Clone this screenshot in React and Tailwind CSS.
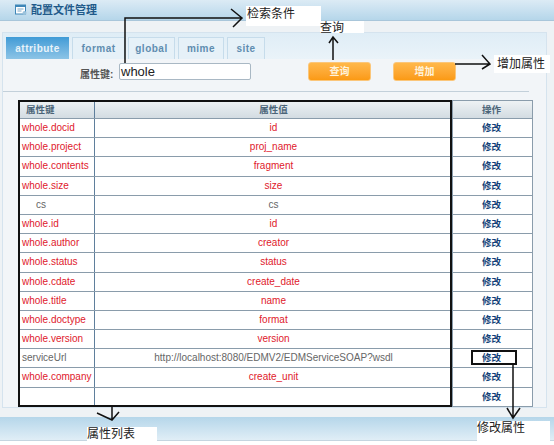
const rows = [
  ["whole.docid", "id"],
  ["whole.project", "proj_name"],
  ["whole.contents", "fragment"],
  ["whole.size", "size"],
  ["cs", "cs", "gray", true],
  ["whole.id", "id"],
  ["whole.author", "creator"],
  ["whole.status", "status"],
  ["whole.cdate", "create_date"],
  ["whole.title", "name"],
  ["whole.doctype", "format"],
  ["whole.version", "version"],
  ["serviceUrl", "http://localhost:8080/EDMV2/EDMServiceSOAP?wsdl", "gray"],
  ["whole.company", "create_unit"],
  ["", ""],
];

const tabs = [
  { name: "attribute", w: "w-[63px]" },
  { name: "format", w: "w-[53px]" },
  { name: "global", w: "w-[47px]" },
  { name: "mime", w: "w-[46px]" },
  { name: "site", w: "w-[38px]" },
];

function Note({ className, children }) {
  return (
    <div className={`absolute bg-white text-[12px] leading-[14px] text-[#222] ${className}`}>
      {children}
    </div>
  );
}

export default function App() {
  return (
    <div className="relative w-[554px] h-[445px] overflow-hidden bg-white font-['Liberation_Sans','Noto_Sans_CJK_SC',sans-serif]">
      {/* title bar */}
      <div className="h-[21px] flex items-center pl-[15px] gap-[4px] bg-gradient-to-b from-[#dcebf5] to-[#b5d6ea] border-b border-[#a9c6da]">
        <svg width="12" height="12" viewBox="0 0 12 12">
          <rect x="0.5" y="1" width="10" height="9" fill="#fff" stroke="#3f87b8" />
          <rect x="0.5" y="1" width="10" height="2" fill="#3f87b8" />
          <path d="M2.5 5h6M2.5 7h4" stroke="#7fa9c6" />
          <circle cx="9.5" cy="9" r="2" fill="#9cc3dc" />
        </svg>
        <span className="text-[11px] font-bold text-[#1f5a8a]">配置文件管理</span>
      </div>

      {/* body */}
      <div className="h-[396px] bg-[#eef2f5] pt-[11px] pl-[2px] pr-[7px]">
        <div className="h-[376px] border border-[#d5e3ee] bg-[#f2f5f8]">
          {/* tabs */}
          <div className="flex h-[26px] items-end gap-[3px] pl-[3px] bg-gradient-to-b from-[#dfedf6] to-[#eaf3f9]">
            {tabs.map((t, i) => (
              <div
                key={t.name}
                className={
                  i === 0
                    ? `${t.w} h-[22px] flex items-center justify-center text-[10px] font-bold tracking-[0.5px] text-[#e8f3fa] bg-gradient-to-b from-[#3f9bd6] to-[#8cc4e6]`
                    : `${t.w} h-[22px] flex items-center justify-center text-[10px] font-bold tracking-[0.5px] text-[#5f8db0] border border-b-0 border-[#c6dceb] bg-[#e6f1f8]`
                }
              >
                {t.name}
              </div>
            ))}
          </div>

          {/* search row */}
          <div className="flex h-[33px] w-[526px] items-start pt-[4px] border-b border-[#c3d0da]">
            <span className="ml-[77px] mt-[4px] w-[39px] text-[10px] font-bold text-[#555]">属性键:</span>
            <div className="w-[132px] h-[17px] bg-white border border-[#a9b8c4] rounded-[2px] pl-[1px] text-[13px] leading-[15px] text-[#222]">
              whole
            </div>
            <button className="ml-[57px] -mt-[1px] w-[63px] h-[19px] rounded-[3px] bg-gradient-to-b from-[#ffb84a] to-[#fb9a12] border border-[#fbc67a] text-[10px] font-bold text-[#fff3dc]">查询</button>
            <button className="ml-[22px] -mt-[1px] w-[63px] h-[19px] rounded-[3px] bg-gradient-to-b from-[#ffb84a] to-[#fb9a12] border border-[#fbc67a] text-[10px] font-bold text-[#fff3dc]">增加</button>
          </div>

          {/* table */}
          <div className="ml-[15px] mt-[8px] w-[515px] bg-white border-t border-x border-[#8a9cab]">
            <div className="grid grid-cols-[76px_358px_1fr] h-[18px] text-[9.5px] font-bold leading-[17px] text-[#4b6478] bg-gradient-to-b from-[#eef2f4] to-[#d3dce2] border-b border-[#8a9cab]">
              <div className="pl-[7px] border-r border-[#5f7f9c]">属性键</div>
              <div className="text-center border-r border-[#8a9cab]">属性值</div>
              <div className="text-center pr-[2px]">操作</div>
            </div>
            {rows.map((r, i) => (
              <div
                key={i}
                className="grid grid-cols-[76px_358px_1fr] h-[19.2px] text-[10px] leading-[18px] border-b border-[#8a9cab]"
              >
                <div
                  className={`border-r border-[#5f7f9c] ${r[3] ? "pl-[17px]" : "pl-[3px]"} ${r[2] ? "text-[#666]" : "text-[#e0202c]"}`}
                >
                  {r[0]}
                </div>
                <div className={`text-center border-r border-[#8a9cab] ${r[2] ? "text-[#666]" : "text-[#e0202c]"}`}>
                  {r[1]}
                </div>
                <div className="text-center pr-[2px] text-[9.5px] font-bold leading-[17px] text-[#123f78]">修改</div>
              </div>
            ))}
          </div>
        </div>
      </div>

      {/* footer */}
      <div className="h-[24px] bg-gradient-to-b from-[#b5d6ea] to-[#e0eef6] border-b border-[#c5d5e0]" />

      {/* annotations */}
      <div className="absolute left-[18px] top-[100px] w-[434px] h-[307px] border-2 border-[#111]" />
      <div className="absolute left-[471px] top-[350px] w-[46px] h-[15px] border-2 border-[#111]" />

      <svg className="absolute left-0 top-0" width="554" height="445" fill="none" stroke="#111" strokeWidth="1.5">
        <path d="M125 63V18H242M231 9l11 9-9 9" />
        <path d="M333 60V37M329 43l4-6 5 6" />
        <path d="M455 64H490M482 55l8 9-8 5" />
        <path d="M112 406V420M97 413l15 7 7-8" />
        <path d="M513 364V418M507 408l6 10 7-10" />
      </svg>

      <Note className="left-[246px] top-[6px] w-[75px] h-[20px] pl-[1px] pt-[1px]">检索条件</Note>
      <Note className="left-[320px] top-[21px] w-[44px] h-[12px] leading-[12px]">查询</Note>
      <Note className="left-[494px] top-[55px] w-[56px] h-[18px] pl-[3px] pt-[2px]">增加属性</Note>
      <Note className="left-[87px] top-[427px] w-[70px] h-[14px]">属性列表</Note>
      <Note className="left-[477px] top-[421px] w-[73px] h-[20px]">修改属性</Note>
    </div>
  );
}
